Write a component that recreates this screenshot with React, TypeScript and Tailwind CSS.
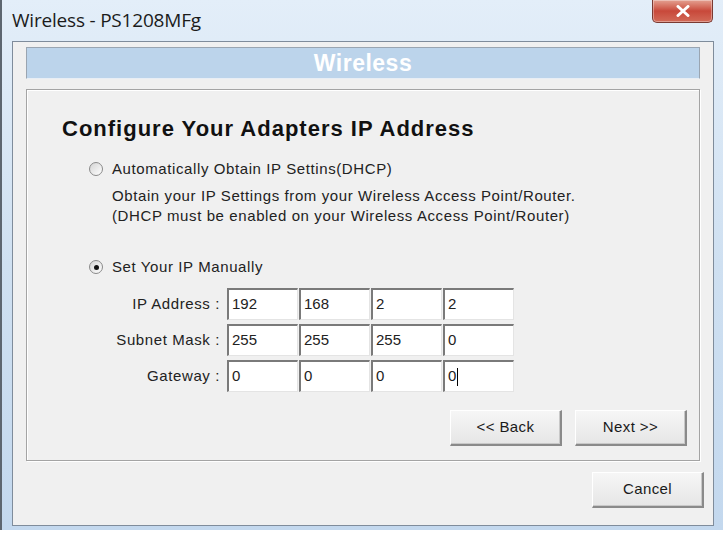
import React from "react";

const ipRows = [
  { label: "IP Address :", values: ["192", "168", "2", "2"] },
  { label: "Subnet Mask :", values: ["255", "255", "255", "0"] },
  { label: "Gateway :", values: ["0", "0", "0", "0"] },
];

function Radio({ checked }: { checked?: boolean }) {
  return (
    <span className="w-[14px] h-[14px] rounded-full border border-[#8a8a8a] bg-gradient-to-br from-[#d4d4d4] to-[#ffffff] flex items-center justify-center shrink-0">
      {checked && <span className="w-[5px] h-[5px] rounded-full bg-[#111]" />}
    </span>
  );
}

function WinButton({ children, className = "" }: { children: React.ReactNode; className?: string }) {
  return (
    <button
      className={
        "h-[36px] w-[112px] bg-gradient-to-b from-[#f6f6f6] to-[#e6e6e6] border-t border-l border-t-[#ffffff] border-l-[#ffffff] border-r-2 border-b-2 border-r-[#8a8a8a] border-b-[#8a8a8a] shadow-[inset_-1px_-1px_0_#c8c8c8] text-[15px] tracking-[0.4px] text-[#1a1a1a] " +
        className
      }
    >
      {children}
    </button>
  );
}

export default function App() {
  return (
    <div className="w-[723px] h-[539px] bg-white overflow-hidden font-['Liberation_Sans',Arial,sans-serif]">
      <div className="relative h-[530px] border-l-2 border-l-[#5d6670] bg-gradient-to-b from-[#e3eef9] via-[#cfe0f1] to-[#c3d8ee] flex flex-col">
        {/* Title bar */}
        <div className="h-[41px] flex items-center pl-[10px]">
          <span className="font-['Open_Sans',sans-serif] text-[19px] text-[#1b1b1b] tracking-[-0.2px]">
            Wireless - PS1208MFg
          </span>
        </div>
        <div className="absolute top-0 left-[650px] w-[61px] h-[23px] rounded-b-[5px] border border-[#7a3a32] border-t-0 bg-gradient-to-b from-[#e3a091] via-[#c8483a] to-[#d26a58] flex items-center justify-center shadow-[inset_0_0_0_1px_rgba(255,255,255,0.35)]">
          <svg width="14" height="12" viewBox="0 0 14 12">
            <path d="M2 1.5l10 9M12 1.5l-10 9" stroke="#fff" strokeWidth="3" strokeLinecap="round" />
          </svg>
        </div>

        {/* Client area */}
        <div className="ml-[10px] w-[702px] h-[485px] border border-[#7f8c9b] bg-[#f0f0f0] px-[13px] pt-[5px] flex flex-col">
          <div className="h-[32px] bg-[#bcd4eb] border border-[#9aa5b1] border-b-[#e8eef5] flex items-center justify-center">
            <span className="text-[23px] tracking-[0.5px] font-bold text-white leading-none">Wireless</span>
          </div>

          <div className="mt-[10px] h-[372px] border border-[#a4a4a4] shadow-[inset_1px_1px_0_#ffffff,1px_1px_0_#ffffff] flex flex-col pl-[35px] pr-[12px]">
            <h1 className="mt-[26px] text-[22px] leading-[26px] tracking-[1px] font-bold text-[#111]">
              Configure Your Adapters IP Address
            </h1>

            <div className="mt-[16px] ml-[27px] h-[22px] flex items-center gap-[9px] text-[15px] tracking-[0.6px] text-[#222]">
              <Radio />
              <span>Automatically Obtain IP Settins(DHCP)</span>
            </div>
            <div className="mt-[6px] ml-[50px] text-[15px] tracking-[0.6px] leading-[20px] text-[#222]">
              <div>Obtain your IP Settings from your Wireless Access Point/Router.</div>
              <div>(DHCP must be enabled on your Wireless Access Point/Router)</div>
            </div>

            <div className="mt-[30px] ml-[27px] h-[22px] flex items-center gap-[9px] text-[15px] tracking-[0.6px] text-[#222]">
              <Radio checked />
              <span>Set Your IP Manually</span>
            </div>

            <div className="mt-[10px] flex flex-col gap-[4px]">
              {ipRows.map((row, ri) => (
                <div key={row.label} className="flex items-center h-[32px]">
                  <span className="w-[158px] text-right text-[15px] tracking-[0.6px] text-[#222]">{row.label}</span>
                  <div className="ml-[7px] flex gap-[1px]">
                    {row.values.map((v, i) => (
                      <div
                        key={i}
                        className="w-[71px] h-[32px] bg-white border-t-2 border-l-2 border-t-[#7a7a7a] border-l-[#7a7a7a] border-r border-b border-r-[#e4e4e4] border-b-[#e4e4e4] flex items-center pl-[3px] text-[15px] text-[#222]"
                      >
                        {v}
                        {ri === 2 && i === 3 && <span className="ml-[1px] w-px h-[18px] bg-black" />}
                      </div>
                    ))}
                  </div>
                </div>
              ))}
            </div>

            <div className="mt-[18px] flex justify-end gap-[13px]">
              <WinButton>&lt;&lt; Back</WinButton>
              <WinButton>Next &gt;&gt;</WinButton>
            </div>
          </div>

          <div className="mt-[11px] flex justify-end mr-[-4px]">
            <WinButton className="w-[111px]">Cancel</WinButton>
          </div>
        </div>
      </div>
    </div>
  );
}
